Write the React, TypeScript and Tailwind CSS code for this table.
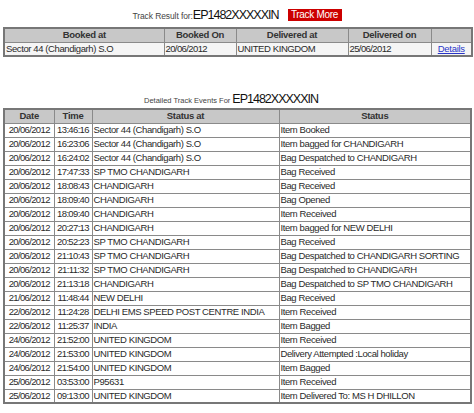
import React from "react";

const events: [string, string, string, string][] = [
  ["20/06/2012", "13:46:16", "Sector 44 (Chandigarh) S.O", "Item Booked"],
  ["20/06/2012", "16:23:06", "Sector 44 (Chandigarh) S.O", "Item bagged for CHANDIGARH"],
  ["20/06/2012", "16:24:02", "Sector 44 (Chandigarh) S.O", "Bag Despatched to CHANDIGARH"],
  ["20/06/2012", "17:47:33", "SP TMO CHANDIGARH", "Bag Received"],
  ["20/06/2012", "18:08:43", "CHANDIGARH", "Bag Received"],
  ["20/06/2012", "18:09:40", "CHANDIGARH", "Bag Opened"],
  ["20/06/2012", "18:09:40", "CHANDIGARH", "Item Received"],
  ["20/06/2012", "20:27:13", "CHANDIGARH", "Item bagged for NEW DELHI"],
  ["20/06/2012", "20:52:23", "SP TMO CHANDIGARH", "Bag Received"],
  ["20/06/2012", "21:10:43", "SP TMO CHANDIGARH", "Bag Despatched to CHANDIGARH SORTING"],
  ["20/06/2012", "21:11:32", "SP TMO CHANDIGARH", "Bag Despatched to CHANDIGARH"],
  ["20/06/2012", "21:13:18", "CHANDIGARH", "Bag Despatched to SP TMO CHANDIGARH"],
  ["21/06/2012", "11:48:44", "NEW DELHI", "Bag Received"],
  ["22/06/2012", "11:24:28", "DELHI EMS SPEED POST CENTRE INDIA", "Item Received"],
  ["22/06/2012", "11:25:37", "INDIA", "Item Bagged"],
  ["24/06/2012", "21:52:00", "UNITED KINGDOM", "Item Received"],
  ["24/06/2012", "21:53:00", "UNITED KINGDOM", "Delivery Attempted :Local holiday"],
  ["24/06/2012", "21:54:00", "UNITED KINGDOM", "Item Bagged"],
  ["25/06/2012", "03:53:00", "P95631", "Item Received"],
  ["25/06/2012", "09:13:00", "UNITED KINGDOM", "Item Delivered To: MS H DHILLON"],
];

const th =
  "border border-[#8a8a8a] bg-[#c8c8c8] font-bold text-center h-[14px] p-0 leading-[12px] text-[9.5px] tracking-[-0.3px] text-[#333] overflow-hidden whitespace-nowrap";
const td =
  "border border-[#8a8a8a] h-[14px] p-0 leading-[12px] whitespace-nowrap overflow-hidden text-[9.5px] text-[#2a2a2a]";
const tdText = td + " text-left pl-[1px] tracking-[-0.4px]";
const tdNum = td + " text-center tracking-[-0.65px]";

export default function App() {
  return (
    <div
      className="w-[474px] h-[413px] bg-white text-[#222] px-[3px] pt-[7px] overflow-hidden"
      style={{ fontFamily: '"Liberation Sans", Arial, sans-serif' }}
    >
      <div className="flex items-end justify-center h-[15px]">
        <span className="text-[8.5px] leading-[11px] text-[#444] tracking-[-0.1px]">Track Result for:</span>
        <span className="text-[12.5px] leading-[13px] text-[#111] tracking-[-1px] mr-[9px]">EP1482XXXXXIN</span>
        <span className="bg-[#cc0000] text-white text-[10px] tracking-[-0.3px] h-[12px] w-[54px] mb-[1px] flex items-center justify-center leading-[12px]">
          Track More
        </span>
      </div>
      <table className="mt-[5px] w-[468px] border-collapse border-[2px] border-[#777] table-fixed">
        <colgroup>
          <col className="w-[160px]" />
          <col className="w-[72px]" />
          <col className="w-[112px]" />
          <col className="w-[83px]" />
          <col className="w-[41px]" />
        </colgroup>
        <thead>
          <tr>
            <th className={th}>Booked at</th>
            <th className={th}>Booked On</th>
            <th className={th}>Delivered at</th>
            <th className={th}>Delivered on</th>
            <th className={th}></th>
          </tr>
        </thead>
        <tbody>
          <tr className="bg-[#f5f5f5]">
            <td className={tdText}>Sector 44 (Chandigarh) S.O</td>
            <td className={tdText + " tracking-[-0.6px]"}>20/06/2012</td>
            <td className={tdText}>UNITED KINGDOM</td>
            <td className={tdText + " tracking-[-0.6px]"}>25/06/2012</td>
            <td className={td + " text-center"}>
              <span className="text-[#2a36c8] underline tracking-[-0.3px]">Details</span>
            </td>
          </tr>
        </tbody>
      </table>
      <div className="flex items-end justify-center mt-[35px] h-[14px] mr-[12px]">
        <span className="text-[7.5px] text-[#444] mr-[2px] leading-[10px]">Detailed Track Events For</span>
        <span className="text-[12.5px] leading-[13px] text-[#111] tracking-[-1px]">EP1482XXXXXIN</span>
      </div>
      <table className="mt-[2px] w-[467px] border-collapse border-[2px] border-[#777] table-fixed">
        <colgroup>
          <col className="w-[50px]" />
          <col className="w-[38px]" />
          <col className="w-[187px]" />
          <col className="w-[192px]" />
        </colgroup>
        <thead>
          <tr>
            <th className={th}>Date</th>
            <th className={th}>Time</th>
            <th className={th}>Status at</th>
            <th className={th}>Status</th>
          </tr>
        </thead>
        <tbody>
          {events.map((e, i) => (
            <tr key={i} className="bg-white">
              <td className={tdNum}>{e[0]}</td>
              <td className={tdNum + " tracking-[-0.8px]"}>{e[1]}</td>
              <td className={tdText}>{e[2]}</td>
              <td className={tdText}>{e[3]}</td>
            </tr>
          ))}
        </tbody>
      </table>
    </div>
  );
}
